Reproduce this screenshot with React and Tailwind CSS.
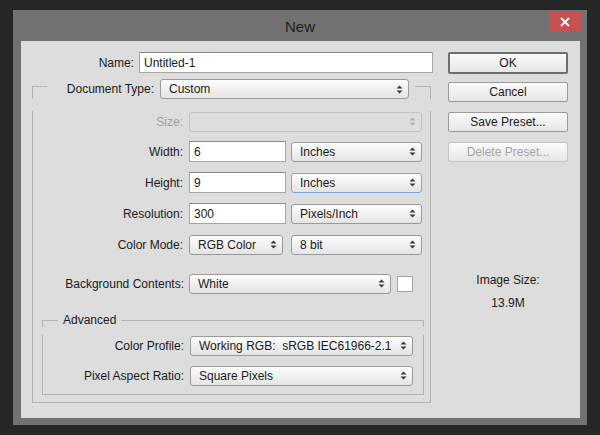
const FONT = { fontFamily: '"Liberation Sans", Arial, sans-serif' };

function Arrows({ disabled }) {
  const c = disabled ? "#b0b0b0" : "#3a3a3a";
  return (
    <svg width="7" height="9" viewBox="0 0 7 9" className="shrink-0">
      <path d="M3.5 0.5 L6.5 3.5 L0.5 3.5 Z" fill={c} />
      <path d="M0.5 5.5 L6.5 5.5 L3.5 8.5 Z" fill={c} />
    </svg>
  );
}

function Select({ value, w, focused, disabled, pre }) {
  const border = focused
    ? "border-[#7aa7d8]"
    : disabled
    ? "border-[#c2c2c2]"
    : "border-[#9a9a9a]";
  const bg = disabled
    ? "bg-[#dedede]"
    : "bg-gradient-to-b from-[#fdfdfd] to-[#e4e4e4]";
  return (
    <div
      className={`h-[20px] flex items-center justify-between pl-[8px] pr-[5px] border rounded-[3px] ${border} ${bg} text-[#1a1a1a] ${w}`}
    >
      <span className={pre ? "whitespace-pre" : ""}>{value}</span>
      <Arrows disabled={disabled} />
    </div>
  );
}

function Input({ value, w }) {
  return (
    <div
      className={`h-[21px] flex items-center px-[4px] bg-white border border-[#a6a6a6] border-t-[#8c8c8c] text-[#1a1a1a] ${w}`}
    >
      {value}
    </div>
  );
}

function Row({ label, lw, mt, muted, children }) {
  return (
    <div className={`flex items-center h-[21px] ${mt}`}>
      <div
        className={`text-right ${lw} ${muted ? "text-[#a0a0a0]" : "text-[#1a1a1a]"}`}
      >
        {label}
      </div>
      {children}
    </div>
  );
}

function Button({ label, mt, primary, disabled }) {
  const cls = primary
    ? "h-[22px] border-2 border-[#6e6e6e]"
    : disabled
    ? "h-[20px] border border-[#c4c4c4] text-[#a3a3a3]"
    : "h-[20px] border border-[#9a9a9a]";
  return (
    <div
      className={`w-[120px] flex items-center justify-center rounded-[2px] bg-gradient-to-b from-[#fbfbfb] to-[#e6e6e6] ${
        disabled ? "" : "text-[#1a1a1a]"
      } ${cls} ${mt}`}
    >
      {label}
    </div>
  );
}

export default function App() {
  return (
    <div
      className="w-[600px] h-[435px] bg-[#262626] pt-[10px] pl-[13px] text-[12px]"
      style={FONT}
    >
      <div className="w-[574px] h-[415px] bg-[#727272] flex flex-col">
        {/* title bar */}
        <div className="relative h-[31px] flex items-center justify-center">
          <span className="text-[15px] text-[#1c1c1c] mt-[4px]">New</span>
          <div className="absolute right-[6px] top-[1px] w-[32px] h-[21px] bg-[#c75050] flex items-center justify-center">
            <svg width="10" height="10" viewBox="0 0 10 10">
              <path d="M1 1 L9 9 M9 1 L1 9" stroke="#fff" strokeWidth="1.8" />
            </svg>
          </div>
        </div>

        {/* dialog body */}
        <div className="ml-[8px] w-[559px] h-[377px] bg-[#dddddd] flex">
          {/* left column */}
          <div className="ml-[11px] w-[401px] pt-[11px]">
            <Row label="Name:" lw="w-[102px]">
              <div className="ml-[5px]">
                <Input value="Untitled-1" w="w-[294px]" />
              </div>
            </Row>

            {/* group box */}
            <div className="w-[399px] mt-[6px]">
              <div className="flex items-start h-[20px]">
                <div className="w-[15px] h-[13px] mt-[7px] border-t border-l border-[#b3b3b3]" />
                <div className="w-[107px] h-[20px] flex items-center justify-end text-[#1a1a1a]">
                  Document Type:
                </div>
                <div className="ml-[6px]">
                  <Select value="Custom" w="w-[249px]" />
                </div>
                <div className="w-[6px]" />
                <div className="w-[16px] h-[13px] mt-[7px] border-t border-r border-[#b3b3b3]" />
              </div>

              <div className="border-l border-r border-b border-[#b3b3b3] pb-[7px]">
                <Row label="Size:" lw="w-[150px]" mt="mt-[12px]" muted>
                  <div className="ml-[6px]">
                    <Select value="" w="w-[233px]" disabled />
                  </div>
                </Row>
                <Row label="Width:" lw="w-[150px]" mt="mt-[9px]">
                  <div className="ml-[6px]">
                    <Input value="6" w="w-[97px]" />
                  </div>
                  <div className="ml-[5px]">
                    <Select value="Inches" w="w-[131px]" />
                  </div>
                </Row>
                <Row label="Height:" lw="w-[150px]" mt="mt-[10px]">
                  <div className="ml-[6px]">
                    <Input value="9" w="w-[97px]" />
                  </div>
                  <div className="ml-[5px]">
                    <Select value="Inches" w="w-[131px]" focused />
                  </div>
                </Row>
                <Row label="Resolution:" lw="w-[150px]" mt="mt-[10px]">
                  <div className="ml-[6px]">
                    <Input value="300" w="w-[97px]" />
                  </div>
                  <div className="ml-[5px]">
                    <Select value="Pixels/Inch" w="w-[131px]" />
                  </div>
                </Row>
                <Row label="Color Mode:" lw="w-[150px]" mt="mt-[10px]">
                  <div className="ml-[6px]">
                    <Select value="RGB Color" w="w-[94px]" />
                  </div>
                  <div className="ml-[8px]">
                    <Select value="8 bit" w="w-[131px]" />
                  </div>
                </Row>
                <Row label="Background Contents:" lw="w-[151px]" mt="mt-[18px]">
                  <div className="ml-[5px]">
                    <Select value="White" w="w-[202px]" />
                  </div>
                  <div className="ml-[6px] w-[16px] h-[16px] bg-white border border-[#a6a6a6]" />
                </Row>

                {/* advanced box */}
                <div className="ml-[9px] w-[382px] mt-[19px]">
                  <div className="flex items-start h-[14px]">
                    <div className="w-[16px] h-[7px] mt-[7px] border-t border-l border-[#b3b3b3]" />
                    <div className="ml-[5px] h-[14px] leading-[14px] text-[#1a1a1a]">Advanced</div>
                    <div className="flex-1 ml-[5px] h-[7px] mt-[7px] border-t border-r border-[#b3b3b3]" />
                  </div>
                  <div className="border-l border-r border-b border-[#b3b3b3] pb-[8px]">
                    <Row label="Color Profile:" lw="w-[141px]" mt="mt-[8px]">
                      <div className="ml-[6px]">
                        <Select
                          value="Working RGB:  sRGB IEC61966-2.1"
                          w="w-[223px]"
                          pre
                        />
                      </div>
                    </Row>
                    <Row label="Pixel Aspect Ratio:" lw="w-[141px]" mt="mt-[9px]">
                      <div className="ml-[6px]">
                        <Select value="Square Pixels" w="w-[223px]" />
                      </div>
                    </Row>
                  </div>
                </div>
              </div>
            </div>
          </div>

          {/* right column */}
          <div className="ml-[15px] w-[120px] pt-[11px] flex flex-col">
            <Button label="OK" primary />
            <Button label="Cancel" mt="mt-[8px]" />
            <Button label="Save Preset..." mt="mt-[10px]" />
            <Button label="Delete Preset..." mt="mt-[10px]" disabled />
            <div className="mt-[111px] text-center text-[#1a1a1a] leading-[14px]">
              Image Size:
            </div>
            <div className="mt-[9px] text-center text-[#1a1a1a] leading-[14px]">
              13.9M
            </div>
          </div>
        </div>
      </div>
    </div>
  );
}
